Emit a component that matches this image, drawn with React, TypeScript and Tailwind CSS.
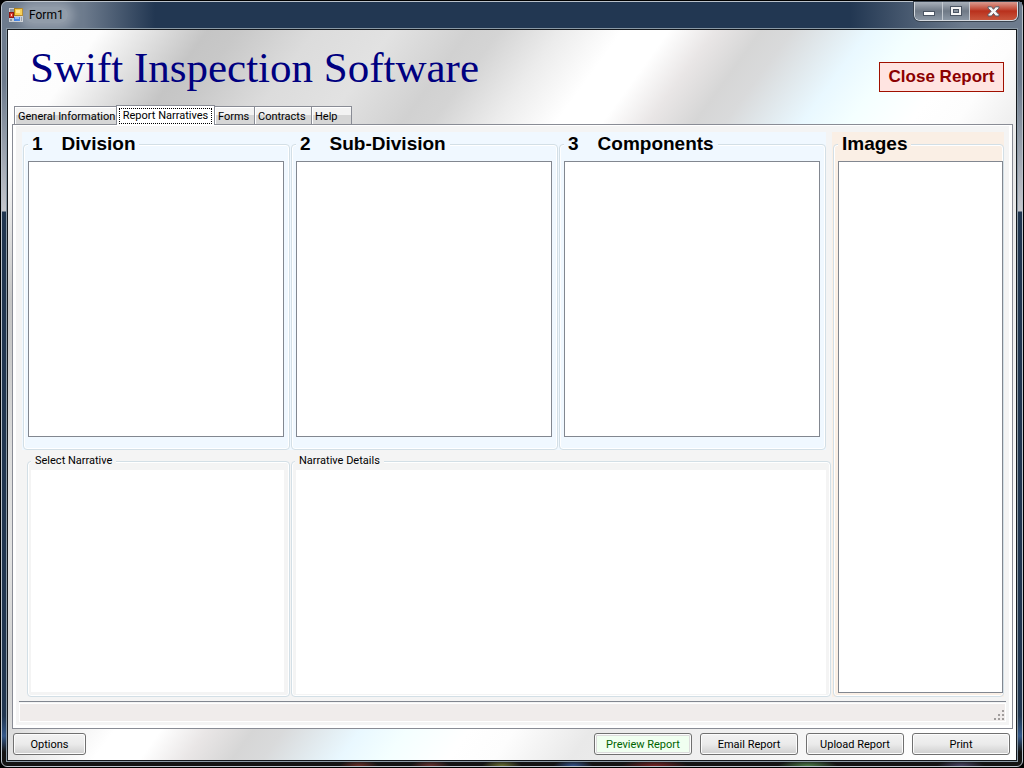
import { ReactNode, useState } from "react";

const tabs = [
  { name: "General Information", width: "w-[103px]" },
  { name: "Report Narratives", width: "w-[99px]" },
  { name: "Forms", width: "w-[41px]" },
  { name: "Contracts", width: "w-[58px]" },
  { name: "Help", width: "w-[41px]" },
];

const actions = ["Preview Report", "Email Report", "Upload Report", "Print"];

function FormIcon() {
  return (
    <svg width="14" height="14" viewBox="0 0 14 14" aria-hidden="true">
      <rect width="14" height="14" fill="#c9cdd2" />
      <path d="M1 1h4v3H1zM1 11h2v2H1zM12 9h1v4h-1z" fill="#8d949d" />
      <rect x="5.5" y="0.5" width="8" height="7" fill="#f7c93c" stroke="#a97912" />
      <rect x="7" y="2" width="4" height="3" fill="#fde58c" />
      <rect x="0.5" y="4.5" width="4" height="5" fill="#d83a2c" stroke="#8e1610" />
      <rect x="2" y="6" width="1" height="2" fill="#ffc9c0" />
      <rect x="5" y="9" width="6" height="4" fill="#3f7fe0" />
      <rect x="6" y="9" width="4" height="2" fill="#8fb9f5" />
    </svg>
  );
}

function WindowButtons() {
  const glass =
    "flex items-center justify-center border-r border-[#c3c9d0] bg-linear-to-b from-[#a9b1bb] from-0% via-[#6f7986] via-50% to-[#8c97a4] to-100%";
  return (
    <div className="flex h-[19px] w-[104px] self-start overflow-hidden rounded-b-md border border-t-0 border-[#d5dae0] shadow-[0_0_0_1px_#39434f]">
      <button aria-label="Minimize" className={`${glass} w-7`}>
        <svg width="12" height="5" viewBox="0 0 12 5" className="mt-1">
          <rect x="0.5" y="0.5" width="11" height="4" fill="#fff" stroke="#4b5563" />
        </svg>
      </button>
      <button aria-label="Maximize" className={`${glass} w-[27px]`}>
        <svg width="12" height="10" viewBox="0 0 12 10">
          <rect x="0.5" y="0.5" width="11" height="9" fill="#f4f4f4" stroke="#4b5563" />
          <rect x="3.5" y="3.5" width="5" height="3" fill="#8a939e" stroke="#4b5563" />
        </svg>
      </button>
      <button
        aria-label="Close"
        className="flex flex-1 items-center justify-center bg-linear-to-b from-[#d99a90] from-0% via-[#b9301c] via-50% to-[#c9553c] to-100%"
      >
        <svg width="13" height="11" viewBox="0 0 13 11">
          <path
            d="M1 .8h3.5l2 2.5 2-2.5H12v1.4L8.8 5.3 12 8.6V10H8.5l-2-2.5-2 2.5H1V8.6l3.2-3.3L1 2.2z"
            fill="#f8f8f8"
            stroke="#565b66"
            strokeWidth="1"
          />
        </svg>
      </button>
    </div>
  );
}

function Group({
  title,
  number,
  tone,
  children,
}: {
  title: string;
  number?: string;
  tone: "blue" | "linen" | "plain";
  children: ReactNode;
}) {
  const bg = { blue: "bg-[#f0f8ff]", linen: "bg-[#faefe5]", plain: "bg-[#f4f4f4]" }[tone];
  const legend =
    tone === "plain" ? "ml-[3px] px-1 text-[11px]/3" : "ml-1 px-1 text-[19px]/6 font-bold";
  return (
    <div className={`flex min-w-0 flex-1 flex-col pl-px ${bg}`}>
      <fieldset className="flex min-w-0 flex-1 flex-col rounded-sm border border-[#d3dfe6] shadow-[inset_0_0_0_1px_#fff]">
        <legend className={`${legend} ${bg}`}>
          {number && <span className="mr-[19px]">{number}</span>}
          {title}
        </legend>
        {children}
      </fieldset>
    </div>
  );
}

function ListBox({ label, className }: { label: string; className: string }) {
  return (
    <select
      multiple
      aria-label={label}
      className={`min-w-0 flex-1 rounded-none bg-white bg-none outline-none ${className}`}
    />
  );
}

function ResizeGrip() {
  return (
    <svg width="11" height="11" viewBox="0 0 11 11" fill="#a19d9c" aria-hidden="true">
      <path d="M8 0h2v2H8zM8 4h2v2H8zM4 4h2v2H4zM8 8h2v2H8zM4 8h2v2H4zM0 8h2v2H0z" />
    </svg>
  );
}

export default function App() {
  const [active, setActive] = useState("Report Narratives");

  return (
    <div className="flex min-h-screen bg-black p-px font-['Roboto','Liberation_Sans',sans-serif] text-[11px] text-black">
      <div className="flex flex-1 flex-col rounded-md border border-[#b9c1ca] bg-[radial-gradient(20px_6px_at_35%_100%,#6e3028,transparent),radial-gradient(20px_6px_at_42%_100%,#6b3430,transparent),radial-gradient(20px_6px_at_49%_100%,#6c7234,transparent),radial-gradient(20px_6px_at_56%_100%,#35558e,transparent),radial-gradient(34px_6px_at_64%_100%,#7a2424,transparent),radial-gradient(30px_6px_at_79%_100%,#4f7f4a,transparent),radial-gradient(24px_6px_at_94%_100%,#4b4668,transparent),linear-gradient(#6d7b8d_0,#6d7b8d_80px,#c4c6cc_209px,#213650_210px,#213650_calc(100%-50px),#34588a_calc(100%-30px),#141414_calc(100%-14px))] px-1 pb-1">
        <header className="-mx-1 flex h-[26px] items-center rounded-t-md bg-linear-to-r/srgb from-[#6d7b8d] from-8% via-[#223752] via-15% to-[#223752] to-75% pl-[7px]">
          <FormIcon />
          <h1 className="ml-0.5 rounded-full bg-white/25 px-1 text-xs shadow-[0_0_10px_6px_rgba(255,255,255,0.25)]">
            Form1
          </h1>
          <div className="ml-auto flex h-full flex-1 justify-end bg-linear-to-r from-transparent from-82% to-[#6d7b8d] to-94% pr-1">
            <WindowButtons />
          </div>
        </header>

        <div className="flex flex-1 flex-col border border-[#8a99a5]">
          <div className="flex flex-1 flex-col border border-[#14181d] bg-[linear-gradient(126deg,#fff_0%,#fdfdfd_6%,#c5c5c5_13%,#c8c8c8_15%,#dcdcdc_20%,#e2e2e2_25%,#d1d1d1_30%,#d4d4d4_32%,#ececec_36%,#fff_40%,#fff_43%,#e9e6e6_46%,#d6d6d6_49%,#d9dadb_51%,#e9f8ff_56%,#f4ffff_59%,#fff_63%,#fdfdfd_66%,#e9e9e9_71%,#f0f0f0_80%,#fff_94%)]">
            <div className="flex h-[75px] items-center justify-between pr-3 pl-[22px]">
              <h2 className="font-['Liberation_Serif',serif] text-[43px] leading-none text-[#000080]">
                Swift Inspection Software
              </h2>
              <button className="mt-[18px] h-[30px] w-[125px] border border-[#a01000] bg-[#ffe4e1] font-['Liberation_Sans',sans-serif] text-[17px] font-bold text-[#8b0000]">
                Close Report
              </button>
            </div>

            <div role="tablist" className="z-10 flex items-end pl-[6px] whitespace-nowrap">
              {tabs.map((tab) => (
                <button
                  key={tab.name}
                  role="tab"
                  aria-selected={active === tab.name}
                  onClick={() => setActive(tab.name)}
                  className={
                    active === tab.name
                      ? `-mb-px -ml-px h-5 border border-b-0 border-[#898c95] bg-white p-[2px] pb-px ${tab.width}`
                      : `-ml-px h-[18px] border border-b-0 border-[#898c95] bg-linear-to-b from-[#f3f3f3] from-50% to-[#d6d6d6] to-50% pt-px pl-[3px] text-left leading-none shadow-[inset_1px_1px_0_#fff] first:ml-0 ${tab.width}`
                  }
                >
                  {active === tab.name ? (
                    <span className="flex h-full items-center justify-center border border-dotted border-black pb-[2px] leading-none">
                      {tab.name}
                    </span>
                  ) : (
                    tab.name
                  )}
                </button>
              ))}
            </div>

            <main className="mr-[3px] ml-1 flex flex-1 flex-col border border-[#898c95] bg-white p-[3px] pt-px">
              <div className="flex flex-1 flex-col bg-[#f4f4f4] px-[3px] pt-[6px] pb-[3px]">
                <div className="flex flex-1 gap-px pr-[2px] pl-[3px]">
                  <div className="flex min-w-0 flex-1 flex-col gap-[5px]">
                    <div className="mr-[5px] grid grid-cols-3 font-['Liberation_Sans',sans-serif]">
                      <Group number="1" title="Division" tone="blue">
                        <ListBox label="Division" className="mt-[5px] mr-[5px] mb-3 ml-1 min-h-[276px] border border-[#828790]" />
                      </Group>
                      <Group number="2" title="Sub-Division" tone="blue">
                        <ListBox label="Sub-Division" className="mt-[5px] mr-[5px] mb-3 ml-1 min-h-[276px] border border-[#828790]" />
                      </Group>
                      <Group number="3" title="Components" tone="blue">
                        <ListBox label="Components" className="mt-[5px] mr-[5px] mb-3 ml-1 min-h-[276px] border border-[#828790]" />
                      </Group>
                    </div>
                    <div className="grid flex-1 grid-cols-[264fr_541fr] pl-1">
                      <Group title="Select Narrative" tone="plain">
                        <ListBox label="Select Narrative" className="mt-[3px] mr-[5px] mb-1 ml-[3px]" />
                      </Group>
                      <Group title="Narrative Details" tone="plain">
                        <textarea
                          aria-label="Narrative Details"
                          className="mt-[3px] mr-1 mb-[2px] ml-1 flex-1 resize-none bg-white outline-none"
                        />
                      </Group>
                    </div>
                  </div>
                  <div className="flex w-[172px] font-['Liberation_Sans',sans-serif]">
                    <Group title="Images" tone="linen">
                      <ListBox label="Images" className="mt-[5px] mb-[3px] ml-1 border border-[#828790]" />
                    </Group>
                  </div>
                </div>
                <div role="status" className="mt-1 border-t border-[#828790] pt-px">
                  <div className="flex h-[19px] items-end justify-end border border-white bg-[#f0eceb]">
                    <ResizeGrip />
                  </div>
                </div>
              </div>
            </main>

            <footer className="flex gap-2 px-[6px] pt-1 pb-[5px] pl-[5px]">
              <button className="mr-auto h-[22px] w-[73px] rounded-[3px] border border-[#707070] bg-linear-to-b from-[#f2f2f2] from-0% via-[#ebebeb] via-50% to-[#cfcfcf] to-100% leading-none shadow-[inset_0_0_0_1px_#fcfcfc]">
                Options
              </button>
              {actions.map((action) => (
                <button
                  key={action}
                  className={`h-[22px] w-[98px] rounded-[3px] border border-[#707070] leading-none ${
                    action === "Preview Report"
                      ? "bg-[#f0fff0] text-[#006400] shadow-[inset_0_0_0_1px_#fcfcfc,inset_0_0_0_2px_#dcdcdc]"
                      : "bg-linear-to-b from-[#f2f2f2] from-0% via-[#ebebeb] via-50% to-[#cfcfcf] to-100% shadow-[inset_0_0_0_1px_#fcfcfc]"
                  }`}
                >
                  {action}
                </button>
              ))}
            </footer>
          </div>
        </div>
      </div>
    </div>
  );
}
